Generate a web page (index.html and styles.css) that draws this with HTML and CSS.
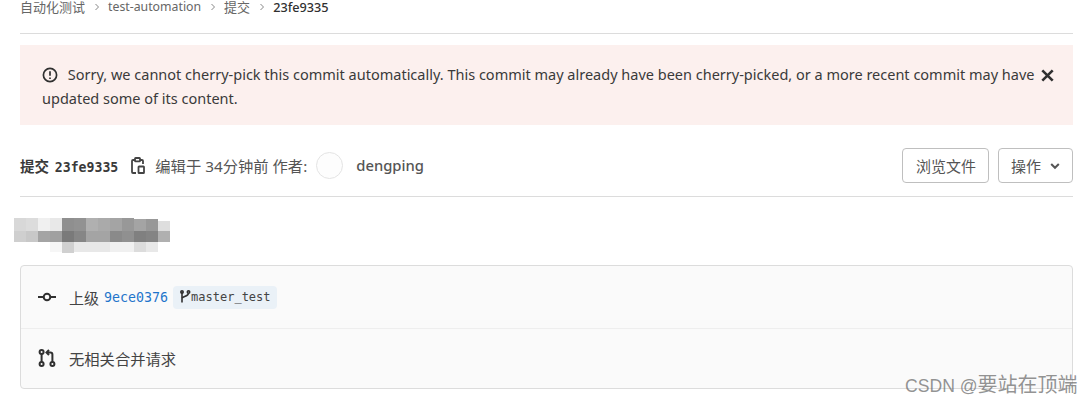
FILE: index.html
```html
<!DOCTYPE html>
<html lang="en">
<head>
    <meta charset="UTF-8">
    <meta name="viewport" content="width=device-width, initial-scale=1.0">
    <title>Commit 23fe9335</title>
    <link rel="stylesheet" href="styles.css">
</head>
<body>
    <!-- Breadcrumb -->
    <div class="breadcrumb">
        <span class="crumb-cjk">自动化测试</span>
        <svg class="crumb-sep" viewBox="0 0 8 8"><path d="M2.5 1l3 3-3 3" /></svg>
        <span>test-automation</span>
        <svg class="crumb-sep" viewBox="0 0 8 8"><path d="M2.5 1l3 3-3 3" /></svg>
        <span class="crumb-cjk">提交</span>
        <svg class="crumb-sep" viewBox="0 0 8 8"><path d="M2.5 1l3 3-3 3" /></svg>
        <span class="crumb-current">23fe9335</span>
    </div>

    <!-- Alert -->
    <div class="alert">
        <p class="alert-text">
            <svg class="alert-icon" viewBox="0 0 16 16">
                <circle cx="8" cy="8" r="6.6" />
                <path d="M8 4.2v4.6" />
                <path d="M8 10.4v1.6" />
            </svg>
            Sorry, we cannot cherry-pick this commit automatically. This commit may already have been cherry-picked, or a more recent commit may have updated some of its content.
        </p>
        <svg class="alert-close" viewBox="0 0 12 12"><path d="M1.2 1.2l9.6 9.6M10.8 1.2l-9.6 9.6" /></svg>
    </div>

    <!-- Commit header -->
    <div class="commit-header">
        <div class="commit-meta">
            <span class="commit-label">提交 <span class="commit-sha">23fe9335</span></span>
            <svg class="copy-icon" viewBox="0 0 14 17">
                <path d="M4 3H2a1 1 0 0 0-1 1v11a1 1 0 0 0 1 1h3" />
                <path d="M9 3h2a1 1 0 0 1 1 1v3" />
                <rect x="4" y="1" width="5" height="3.4" rx="0.6" />
                <rect x="7.5" y="9.5" width="5.5" height="6.5" rx="0.6" />
            </svg>
            <span class="commit-time">编辑于 34分钟前 作者:</span>
            <span class="avatar"></span>
            <span class="author">dengping</span>
        </div>
        <div class="commit-actions">
            <button class="btn">浏览文件</button>
            <button class="btn">操作
                <svg class="btn-caret" viewBox="0 0 10 10"><path d="M1.2 3L5 6.8 8.8 3" /></svg>
            </button>
        </div>
    </div>

    <!-- Blurred commit title -->
    <svg class="title-blur" viewBox="0 0 156 35" shape-rendering="crispEdges">
        <g id="row1">
            <rect x="0" y="0" width="12" height="13" fill="#d8d8d8" />
            <rect x="12" y="0" width="12" height="13" fill="#dcdcdc" />
            <rect x="24" y="0" width="12" height="13" fill="#f0f0f0" />
            <rect x="36" y="0" width="12" height="13" fill="#e8e8e8" />
            <rect x="48" y="0" width="12" height="13" fill="#8f8f8f" />
            <rect x="60" y="0" width="12" height="13" fill="#929292" />
            <rect x="72" y="0" width="12" height="13" fill="#b0b0b0" />
            <rect x="84" y="0" width="12" height="13" fill="#aaaaaa" />
            <rect x="96" y="0" width="12" height="13" fill="#a4a4a4" />
            <rect x="108" y="0" width="12" height="13" fill="#989898" />
            <rect x="120" y="1" width="12" height="12" fill="#a4a4a4" />
            <rect x="132" y="1" width="12" height="12" fill="#989898" />
            <rect x="144" y="3" width="12" height="10" fill="#dedede" />
        </g>
        <g id="row2">
            <rect x="0" y="13" width="12" height="11" fill="#cfcfcf" />
            <rect x="12" y="13" width="12" height="11" fill="#c8c8c8" />
            <rect x="24" y="13" width="12" height="11" fill="#a4a4a4" />
            <rect x="36" y="13" width="12" height="11" fill="#a0a0a0" />
            <rect x="48" y="13" width="12" height="11" fill="#7a7a7a" />
            <rect x="60" y="13" width="12" height="11" fill="#868686" />
            <rect x="72" y="13" width="12" height="11" fill="#a4a4a4" />
            <rect x="84" y="13" width="12" height="11" fill="#a4a4a4" />
            <rect x="96" y="13" width="12" height="11" fill="#8a8a8a" />
            <rect x="108" y="13" width="12" height="11" fill="#909090" />
            <rect x="120" y="13" width="12" height="11" fill="#808080" />
            <rect x="132" y="13" width="12" height="11" fill="#848484" />
            <rect x="144" y="13" width="12" height="11" fill="#b0b0b0" />
        </g>
        <g id="row3">
            <rect x="36" y="24" width="12" height="10" fill="#f6f6f6" />
            <rect x="48" y="24" width="12" height="11" fill="#d0d0d0" />
            <rect x="60" y="24" width="12" height="10" fill="#e8e8e8" />
            <rect x="72" y="24" width="12" height="10" fill="#e8e8e8" />
            <rect x="84" y="24" width="12" height="10" fill="#e8e8e8" />
            <rect x="96" y="24" width="12" height="10" fill="#f0f0f0" />
            <rect x="108" y="24" width="12" height="10" fill="#f0f0f0" />
            <rect x="120" y="24" width="12" height="10" fill="#dcdcdc" />
            <rect x="132" y="24" width="12" height="10" fill="#e8e8e8" />
        </g>
    </svg>

    <!-- Info card -->
    <div class="info-card">
        <div class="info-row">
            <svg class="info-icon" viewBox="0 0 18 18">
                <circle cx="9" cy="9" r="3.3" />
                <path d="M0 9h5.7M12.3 9H18" />
            </svg>
            <span class="info-text">上级</span>
            <a class="sha-link" href="#">9ece0376</a>
            <span class="branch-tag">
                <svg class="branch-icon" viewBox="0 0 12 14">
                    <path d="M3 1.5v11" />
                    <circle cx="3" cy="2" r="1.2" />
                    <circle cx="9.5" cy="2" r="1.2" />
                    <path d="M9.5 3.2c0 2.6-4 3-6.5 4.6" />
                </svg>master_test
            </span>
        </div>
        <div class="info-row info-row-last">
            <svg class="info-icon" viewBox="0 0 18 18">
                <circle cx="3.6" cy="3" r="2" />
                <circle cx="3.6" cy="15" r="2" />
                <circle cx="14.4" cy="15" r="2" />
                <path d="M3.6 5v8" />
                <path d="M14.4 13V5.5a2 2 0 0 0-2-2H9" />
                <path d="M11 1L8.5 3.5 11 6" />
            </svg>
            <span class="info-text info-text-wide">无相关合并请求</span>
        </div>
    </div>

    <div class="watermark">CSDN @<span class="watermark-name">要站在顶端</span></div>
</body>
</html>
```

FILE: styles.css
```css
* {
    margin: 0;
    padding: 0;
    box-sizing: border-box;
    font-family: "Noto Sans", "Noto Sans CJK SC", sans-serif;
}

body {
    background: white;
    color: #3a3a3a;
    font-size: 14.5px;
    width: 1092px;
    height: 401px;
    padding: 0 19px 0 20px;
    position: relative;
    overflow: hidden;
}

.breadcrumb {
    height: 34px;
    border-bottom: 1px solid #dcdcdc;
    display: flex;
    align-items: flex-start;
    gap: 7.5px;
    font-size: 12.3px;
    line-height: 14px;
    color: #666;
}

.crumb-cjk {
    font-size: 13px;
}

.crumb-sep {
    width: 8px;
    height: 8px;
    margin-top: 3px;
    fill: none;
    stroke: #888;
    stroke-width: 1;
}

.crumb-current {
    color: #303030;
    font-size: 12.7px;
    font-weight: 500;
}

.alert {
    margin-top: 11px;
    height: 80px;
    background: #fcf0ee;
    padding: 17px 19px 0 22px;
    display: flex;
    align-items: flex-start;
}

.alert-text {
    flex: 1;
    line-height: 24px;
}

.alert-icon {
    width: 16px;
    height: 16px;
    margin-right: 6px;
    vertical-align: -3px;
    fill: none;
    stroke: #303030;
    stroke-width: 1.7;
}

.alert-close {
    width: 13px;
    height: 13px;
    margin-top: 7px;
    margin-left: 4px;
    fill: none;
    stroke: #303030;
    stroke-width: 2.4;
}

.commit-header {
    margin-top: 21px;
    height: 51px;
    border-bottom: 1px solid #dcdcdc;
    display: flex;
    justify-content: space-between;
    align-items: flex-start;
}

.commit-meta {
    display: flex;
    align-items: center;
    height: 38px;
}

.commit-label {
    font-weight: 700;
    font-size: 14.5px;
}

.commit-sha {
    margin-left: 2px;
    font-family: "DejaVu Sans Mono", monospace;
    font-size: 13.2px;
    font-weight: 700;
}

.copy-icon {
    width: 14px;
    height: 17px;
    margin-left: 13px;
    fill: none;
    stroke: #444;
    stroke-width: 1.8;
}

.commit-time {
    margin-left: 10px;
    font-size: 15.3px;
    color: #555;
}

.avatar {
    width: 27px;
    height: 27px;
    margin-left: 9px;
    border: 1px solid #e4e4e4;
    border-radius: 50%;
    background: #fdfdfd;
}

.author {
    margin-left: 13px;
    font-size: 14.8px;
    font-weight: 500;
    color: #555;
}

.commit-actions {
    display: flex;
    gap: 9px;
    margin-top: 2px;
}

.btn {
    height: 35px;
    padding: 0 12px 0 13px;
    background: white;
    border: 1px solid #bfbfbf;
    border-radius: 4px;
    font-size: 15px;
    color: #555;
    display: flex;
    align-items: center;
    gap: 9px;
}

.btn:last-child {
    padding-left: 12px;
}

.btn-caret {
    width: 10px;
    height: 10px;
    fill: none;
    stroke: #555;
    stroke-width: 2;
}

.title-blur {
    display: block;
    width: 156px;
    height: 35px;
    margin: 21px 0 0 -6px;
}

.info-card {
    margin-top: 12px;
    height: 124px;
    background: #fafafa;
    border: 1px solid #dcdcdc;
    border-radius: 4px;
}

.info-row {
    height: 63px;
    border-bottom: 1px solid #eee;
    padding-left: 17px;
    display: flex;
    align-items: center;
    color: #444;
}

.info-row-last {
    height: 60px;
    padding-bottom: 2px;
    border-bottom: none;
}

.info-icon {
    width: 18px;
    height: 18px;
    margin-right: 13px;
    fill: none;
    stroke: #303030;
    stroke-width: 2;
}

.info-text {
    font-size: 15px;
}

.info-text-wide {
    font-size: 15.3px;
}

.sha-link {
    margin-left: 5px;
    color: #1f75cb;
    text-decoration: none;
    font-family: "DejaVu Sans Mono", monospace;
    font-size: 13.3px;
}

.branch-tag {
    margin-left: 5px;
    height: 23px;
    padding: 0 6px;
    background: #eaf1f7;
    border-radius: 4px;
    display: flex;
    align-items: center;
    font-family: "DejaVu Sans Mono", monospace;
    font-size: 12px;
    color: #444;
}

.branch-icon {
    width: 12px;
    height: 14px;
    fill: none;
    stroke: #303030;
    stroke-width: 1.6;
}

.watermark {
    position: absolute;
    left: 905px;
    top: 369px;
    font-family: "Liberation Sans", "Noto Sans CJK SC", sans-serif;
    font-size: 17.6px;
    color: rgba(100, 100, 100, 0.7);
    white-space: nowrap;
}

.watermark-name {
    font-family: "Noto Sans CJK SC", sans-serif;
    font-size: 20px;
}
```
